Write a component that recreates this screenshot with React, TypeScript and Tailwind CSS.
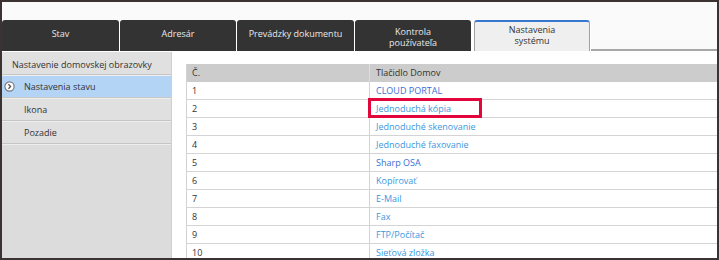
import React from "react";

const rows: { n: string; label: string; color: string }[] = [
  { n: "1", label: "CLOUD PORTAL", color: "text-[#3a6fd4]" },
  { n: "2", label: "Jednoduchá kópia", color: "text-[#3c96de]" },
  { n: "3", label: "Jednoduché skenovanie", color: "text-[#3c96de]" },
  { n: "4", label: "Jednoduché faxovanie", color: "text-[#3c96de]" },
  { n: "5", label: "Sharp OSA", color: "text-[#3a6fd4]" },
  { n: "6", label: "Kopírovať", color: "text-[#3c96de]" },
  { n: "7", label: "E-Mail", color: "text-[#3c96de]" },
  { n: "8", label: "Fax", color: "text-[#3c96de]" },
  { n: "9", label: "FTP/Počítač", color: "text-[#3c96de]" },
  { n: "10", label: "Sieťová zložka", color: "text-[#3c96de]" },
];

export default function App() {
  return (
    <div
      className="w-[719px] h-[260px] overflow-hidden border-2 border-[#3b3331] bg-white flex flex-col text-[9px] text-[#333]"
      style={{ fontFamily: '"Open Sans", "Noto Sans", sans-serif' }}
    >
      <div className="h-[18px] shrink-0 bg-[#fafafa]" />
      <div className="h-[31px] shrink-0 flex gap-px bg-white">
        <div className="w-[117px] h-full bg-[#333333] rounded-t-[3px] flex items-center justify-center text-[#e8e8e8] pb-[4px]">
          Stav
        </div>
        <div className="w-[116px] h-full bg-[#333333] rounded-t-[3px] flex items-center justify-center text-[#e8e8e8] pb-[4px]">
          Adresár
        </div>
        <div className="w-[117px] h-full bg-[#333333] rounded-t-[3px] flex items-center justify-center text-[#e8e8e8] pb-[4px]">
          Prevádzky dokumentu
        </div>
        <div className="w-[116px] h-full bg-[#333333] rounded-t-[3px] flex flex-col items-center text-[#e8e8e8] pt-[6px] leading-[11px]">
          <span className="block">Kontrola</span>
          <span className="block">používateľa</span>
        </div>
        <div className="ml-[2px] w-[116px] h-full bg-[#efefef] border-t-2 border-t-[#3478d0] border-x border-x-[#a0a0a0] rounded-t-[3px] flex flex-col items-center leading-[11px] pt-[2px]">
          <span className="block">Nastavenia</span>
          <span className="block">systému</span>
        </div>
        <div className="flex-1 h-full border-b-2 border-[#a8a8a8] bg-[#fafafa]" />
      </div>
      <div className="flex flex-1 min-h-0">
        <div className="w-[170px] mt-px bg-[#dcdcdc] flex flex-col border-r border-[#cfcfcf]">
          <div className="h-[23px] shrink-0 flex items-center pl-[10px] pt-[4px] bg-[#e0e0e0] border-b border-[#c6c6c6]">
            Nastavenie domovskej obrazovky
          </div>
          <div className="h-[23px] shrink-0 flex items-center bg-[#b4d4f6] border-b border-[#c6c6c6] border-t border-t-[#eeeeee]">
            <svg width="11" height="11" viewBox="0 0 11 11" className="ml-[2px] mr-[9px]">
              <circle cx="5.5" cy="5.5" r="4.6" fill="#ffffff" stroke="#7a7a7a" strokeWidth="1.2" />
              <path d="M4.4 3.3 L6.6 5.5 L4.4 7.7" fill="none" stroke="#555" strokeWidth="1.3" />
            </svg>
            Nastavenia stavu
          </div>
          <div className="h-[23px] shrink-0 flex items-center pl-[22px] bg-[#e0e0e0] border-b border-[#c6c6c6] border-t border-t-[#eeeeee]">
            Ikona
          </div>
          <div className="h-[23px] shrink-0 flex items-center pl-[22px] bg-[#e0e0e0] border-b border-[#c6c6c6] border-t border-t-[#eeeeee]">
            Pozadie
          </div>
          <div className="flex-1 border-t border-t-[#eeeeee]" />
        </div>
        <div className="flex-1 pl-[14px] pt-[13px]">
          <div className="border-l border-[#d2d2d2]">
            <div className="h-[18px] flex bg-[#cccccc]">
              <div className="w-[183px] flex items-center pl-[5px] border-r border-[#dedede]">Č.</div>
              <div className="flex-1 flex items-center pl-[6px]">Tlačidlo Domov</div>
            </div>
            {rows.map((r) => (
              <div key={r.n} className="h-[18px] flex border-b border-[#d4d4d4]">
                <div className="w-[183px] flex items-center pl-[5px] border-r border-[#d4d4d4]">{r.n}</div>
                <div className={`relative flex-1 flex items-center pl-[6px] ${r.color}`}>
                  {r.label}
                  {r.n === "2" && (
                    <div className="absolute left-[-2px] top-[-2px] w-[114px] h-[20px] border-[3px] border-[#e2063c]" />
                  )}
                </div>
              </div>
            ))}
          </div>
        </div>
      </div>
    </div>
  );
}
